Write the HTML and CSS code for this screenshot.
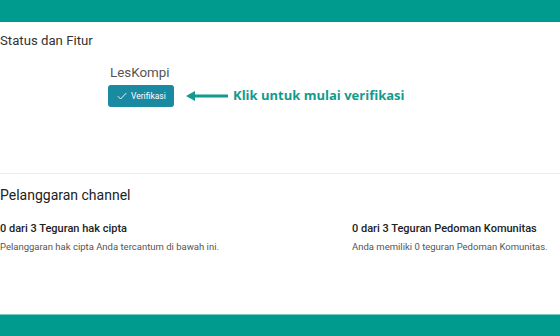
FILE: index.html
```html
<!DOCTYPE html>
<html>
    <head>
        <link rel="stylesheet" href="styles.css">
    </head>
    <body>
        <div class="topBar"></div>
        <div class="page">
            <div class="section">
                <div class="sectionTitle">Status dan Fitur</div>
                <div class="channelBox">
                    <div class="channelName">LesKompi</div>
                    <div class="verifyRow">
                        <div class="verifyButton">
                            <svg width="10" height="8" viewBox="0 0 10 8"><path d="M0.8 4.2 L3.6 7 L9.3 1" fill="none" stroke="white" stroke-width="0.9"/></svg>
                            Verifikasi
                        </div>
                        <svg class="arrow" width="42" height="10" viewBox="0 0 42 10"><path d="M0 5 L9 0 L9 3.5 L42 3.5 L42 6.5 L9 6.5 L9 10 Z" fill="#119b8c"/></svg>
                        <div class="hint">Klik untuk mulai verifikasi</div>
                    </div>
                </div>
            </div>
            <div class="divider"></div>
            <div class="section">
                <div class="sectionTitle big">Pelanggaran channel</div>
                <div class="strikes">
                    <div class="strike">
                        <div class="strikeTitle">0 dari 3 Teguran hak cipta</div>
                        <div class="strikeText">Pelanggaran hak cipta Anda tercantum di bawah ini.</div>
                    </div>
                    <div class="strike">
                        <div class="strikeTitle">0 dari 3 Teguran Pedoman Komunitas</div>
                        <div class="strikeText">Anda memiliki 0 teguran Pedoman Komunitas.</div>
                    </div>
                </div>
            </div>
        </div>
        <div class="bottomBar"></div>
    </body>
</html>
```

FILE: styles.css
```css
body {
    margin: 0;
    height: 336px;
    font-family: Roboto, Arial, Helvetica, sans-serif;
    overflow: hidden;
    background: white;
    display: flex;
    flex-direction: column;
}

.topBar {
    height: 22px;
    background: #009b8f;
}

.bottomBar {
    height: 21px;
    background: #009b8f;
    border-top: 1px solid #7ccdc6;
    margin-top: auto;
}

.page {
    display: flex;
    flex-direction: column;
}

.sectionTitle {
    font-size: 13.2px;
    color: #333;
    margin-top: 11px;
}

.sectionTitle.big {
    font-size: 14px;
    color: #222;
    margin-top: 13px;
}

.channelBox {
    padding-left: 108px;
    margin-top: 17px;
}

.channelName {
    font-size: 13.4px;
    color: #555;
    padding-left: 2px;
}

.verifyRow {
    display: flex;
    align-items: center;
    margin-top: 5px;
}

.verifyButton {
    display: flex;
    align-items: center;
    gap: 4px;
    width: 66px;
    height: 22px;
    box-sizing: border-box;
    padding-left: 9px;
    background: #1a8aa3;
    border-radius: 3px;
    color: white;
    font-size: 8.5px;
}

.arrow {
    margin-left: 12px;
}

.hint {
    margin-left: 5px;
    font-family: "Open Sans", sans-serif;
    font-weight: bold;
    font-size: 13px;
    color: #119b8c;
    margin-top: -3px;
}

.divider {
    height: 1px;
    background: #ececec;
    margin-top: 66px;
}

.strikes {
    display: flex;
    margin-top: 19px;
}

.strike {
    width: 352px;
}

.strike + .strike {
    width: auto;
}

.strikeTitle {
    font-size: 11px;
    font-weight: 500;
    color: #222;
}

.strikeText {
    font-size: 9.5px;
    color: #555;
    margin-top: 6px;
}
```
